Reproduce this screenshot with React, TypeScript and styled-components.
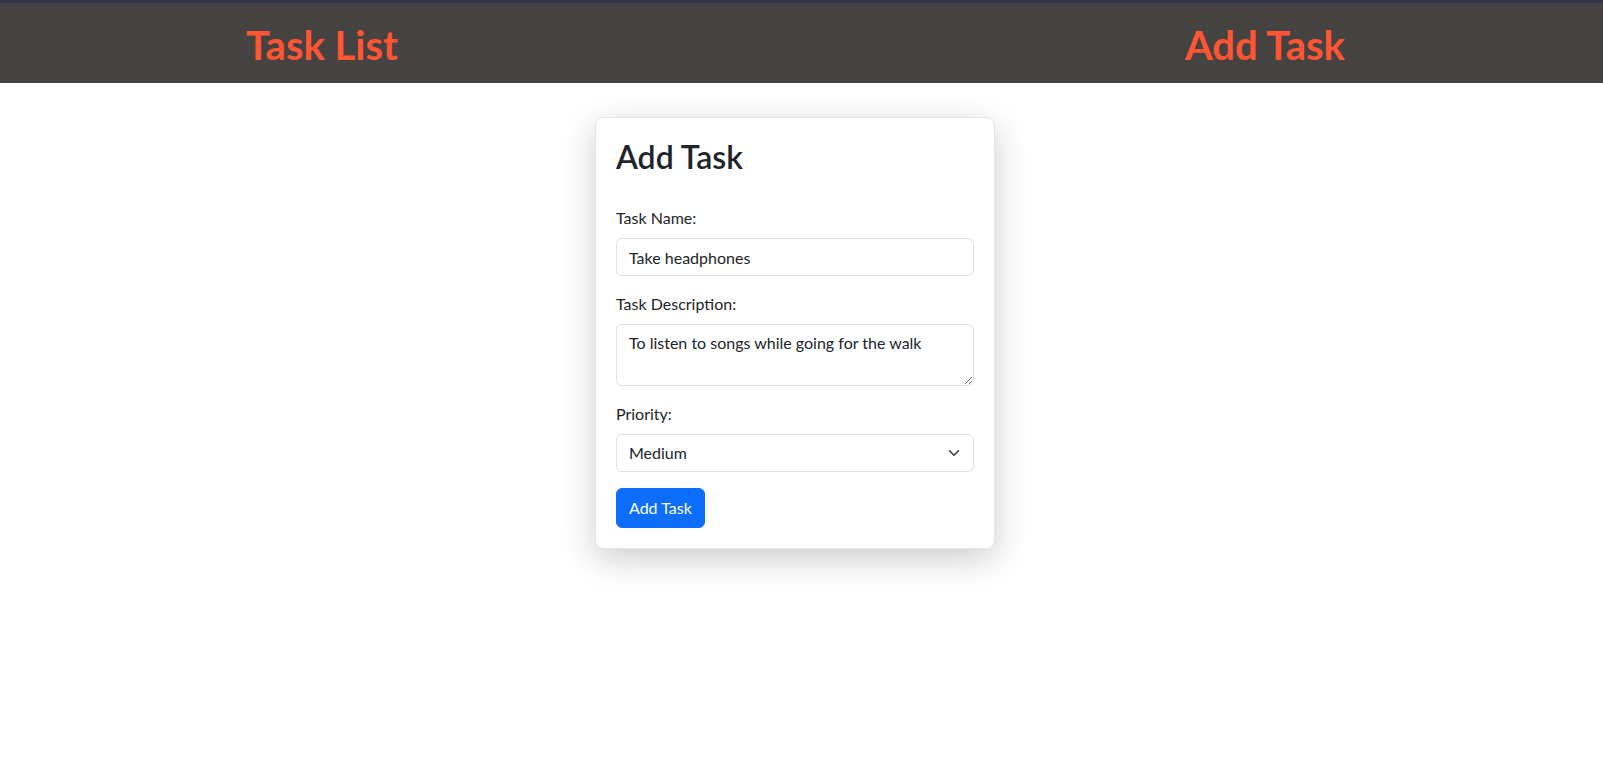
import { useState } from "react";
import styled, { createGlobalStyle } from "styled-components";

const GlobalStyle = createGlobalStyle`
  * {
    box-sizing: border-box;
  }
  body {
    margin: 0;
    background-color: #ffffff;
    font-family: Lato, "Open Sans", sans-serif;
    font-size: 16px;
    line-height: 1.5;
    color: #212529;
  }
`;

const Header = styled.header`
  height: 83px;
  background-color: #454341;
  border-top: 3px solid #30354a;
  display: flex;
  align-items: center;
  justify-content: space-between;
  padding: 0 258px 0 246px;
`;

const NavTitle = styled.a`
  color: #ff5533;
  font-size: 40px;
  font-weight: 700;
  line-height: 1.2;
  text-decoration: none;
  cursor: pointer;
  padding-top: 4px;
`;

const Main = styled.main`
  display: flex;
  align-items: flex-start;
  justify-content: center;
  min-height: calc(100vh - 83px);
  padding: 34px 13px 40px 0;
`;

const Card = styled.div`
  width: 400px;
  background-color: #ffffff;
  border: 1px solid #e4e4e4;
  border-radius: 8px;
  padding: 20px;
  box-shadow: 0 10px 34px rgba(0, 0, 0, 0.2);
`;

const Heading = styled.h2`
  margin: 0 0 30px;
  font-size: 32px;
  font-weight: 600;
  line-height: 1.2;
  color: #212529;
`;

const Field = styled.div`
  margin-bottom: 16px;
`;

const Label = styled.label`
  display: block;
  margin-bottom: 8px;
  font-size: 16px;
  color: #212529;
`;

const inputBase = `
  display: block;
  width: 100%;
  padding: 6px 12px;
  font-family: Lato, "Open Sans", sans-serif;
  font-size: 16px;
  line-height: 24px;
  color: #212529;
  background-color: #ffffff;
  border: 1px solid #dee2e6;
  border-radius: 6px;
  outline: none;
`;

const TextInput = styled.input`
  ${inputBase}
  height: 38px;
`;

const TextArea = styled.textarea`
  ${inputBase}
  height: 62px;
  resize: vertical;
`;

const SelectWrap = styled.div`
  position: relative;
`;

const Select = styled.select`
  ${inputBase}
  height: 38px;
  appearance: none;
  padding-right: 36px;
`;

const Chevron = styled.svg`
  position: absolute;
  right: 12px;
  top: 13px;
  width: 16px;
  height: 12px;
  pointer-events: none;
`;

const SubmitButton = styled.button`
  display: inline-block;
  height: 40px;
  padding: 7px 12px;
  font-family: Lato, "Open Sans", sans-serif;
  font-size: 16px;
  line-height: 24px;
  color: #ffffff;
  background-color: #0d6efd;
  border: 1px solid #0d6efd;
  border-radius: 6px;
  cursor: pointer;
  &:hover {
    background-color: #0b5ed7;
  }
`;

export default function App() {
  const [name, setName] = useState("Take headphones");
  const [description, setDescription] = useState(
    "To listen to songs while going for the walk"
  );
  const [priority, setPriority] = useState("Medium");

  return (
    <>
      <GlobalStyle />
      <Header>
        <NavTitle>Task List</NavTitle>
        <NavTitle>Add Task</NavTitle>
      </Header>
      <Main>
        <Card>
          <Heading>Add Task</Heading>
          <form onSubmit={(e) => e.preventDefault()}>
            <Field>
              <Label htmlFor="taskName">Task Name:</Label>
              <TextInput
                id="taskName"
                value={name}
                onChange={(e) => setName(e.target.value)}
              />
            </Field>
            <Field>
              <Label htmlFor="taskDesc">Task Description:</Label>
              <TextArea
                id="taskDesc"
                rows={2}
                value={description}
                onChange={(e) => setDescription(e.target.value)}
              />
            </Field>
            <Field>
              <Label htmlFor="priority">Priority:</Label>
              <SelectWrap>
                <Select
                  id="priority"
                  value={priority}
                  onChange={(e) => setPriority(e.target.value)}
                >
                  <option>Low</option>
                  <option>Medium</option>
                  <option>High</option>
                </Select>
                <Chevron viewBox="0 0 16 16">
                  <path
                    d="m2 5 6 6 6-6"
                    fill="none"
                    stroke="#343a40"
                    strokeWidth="2"
                    strokeLinecap="round"
                    strokeLinejoin="round"
                  />
                </Chevron>
              </SelectWrap>
            </Field>
            <SubmitButton type="submit">Add Task</SubmitButton>
          </form>
        </Card>
      </Main>
    </>
  );
}
